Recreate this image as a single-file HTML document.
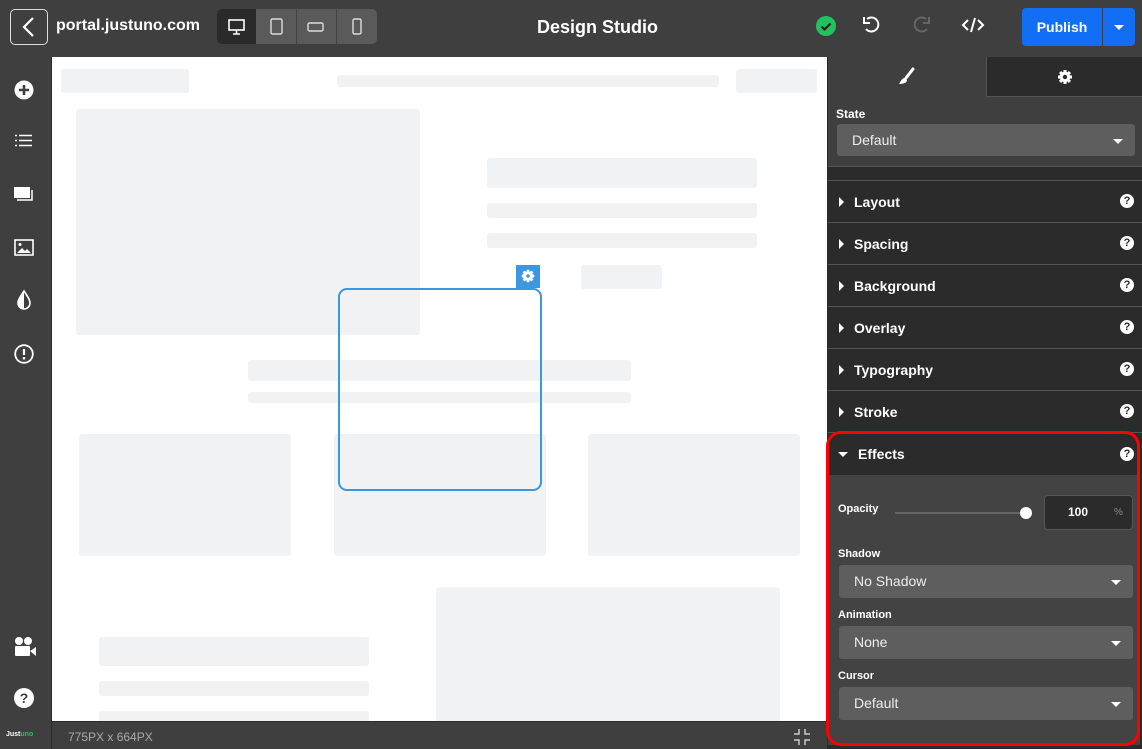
<!DOCTYPE html>
<html><head><meta charset="utf-8"><style>
*{box-sizing:border-box;margin:0;padding:0}
body{width:1142px;height:749px;overflow:hidden;background:#3f3f3f;font-family:"Liberation Sans",sans-serif;color:#fff;position:relative}
.a{position:absolute}
.g{position:absolute;background:#f1f2f4;border-radius:3px}
.row{position:absolute;left:828px;width:314px;height:42px;background:#2b2b2b;border-bottom:1px solid #555;font-weight:bold;font-size:14px}
.row .t{position:absolute;left:26px;top:13px}
.row .tri{position:absolute;left:11px;top:16px;width:0;height:0;border-left:5px solid #fff;border-top:5px solid transparent;border-bottom:5px solid transparent}
.q{position:absolute;right:8px;top:13px;width:14px;height:14px;border-radius:50%;background:#fff;color:#2b2b2b;font-size:11px;font-weight:bold;text-align:center;line-height:14px}
.sel{position:absolute;background:#5e5e5e;border-radius:3px;font-size:14px;color:#eee}
.sel span{position:absolute;left:15px;top:8px}
.sel i{position:absolute;right:12px;top:15px;border-top:5px solid #fff;border-left:5px solid transparent;border-right:5px solid transparent}
.lbl{position:absolute;font-size:12px;font-weight:bold}
</style></head><body>
<svg width="0" height="0" style="position:absolute"><defs>
<g id="gear"><g fill="currentColor"><rect x="-1.6" y="-7" width="3.2" height="14" rx=".6"/><rect x="-1.6" y="-7" width="3.2" height="14" rx=".6" transform="rotate(45)"/><rect x="-1.6" y="-7" width="3.2" height="14" rx=".6" transform="rotate(90)"/><rect x="-1.6" y="-7" width="3.2" height="14" rx=".6" transform="rotate(135)"/><circle r="5.2"/></g></g>
</defs></svg>
<!-- top bar -->
<div class="a" style="left:10px;top:9px;width:38px;height:36px;border:1.5px solid #ddd;border-radius:5px"></div>
<svg class="a" style="left:20px;top:16px" width="18" height="22"><path d="M13 2 L4 11 L13 20" stroke="#fff" stroke-width="2.2" fill="none"/></svg>
<div class="a" style="left:56px;top:17px;font-size:16px;font-weight:bold">portal.justuno.com</div>
<div class="a" style="left:217px;top:9px;width:160px;height:35px;background:#5a5a5a;border-radius:5px;overflow:hidden">
<div class="a" style="left:0;top:0;width:39px;height:35px;background:#2a2a2a"></div>
<div class="a" style="left:79px;top:0;width:1px;height:35px;background:#444"></div>
<div class="a" style="left:119px;top:0;width:1px;height:35px;background:#444"></div>
<svg class="a" style="left:11px;top:9px" width="18" height="18"><rect x="1" y="2" width="15" height="10" fill="none" stroke="#fff" stroke-width="1.6"/><path d="M5 16h7M8.5 12v4" stroke="#fff" stroke-width="1.6"/></svg>
<svg class="a" style="left:52px;top:9px" width="16" height="18"><rect x="2" y="1" width="11" height="15" rx="1.5" fill="none" stroke="#ddd" stroke-width="1.4"/></svg>
<svg class="a" style="left:90px;top:11px" width="18" height="14"><rect x="1" y="3" width="15" height="8" rx="1.5" fill="none" stroke="#ddd" stroke-width="1.4"/></svg>
<svg class="a" style="left:133px;top:9px" width="14" height="18"><rect x="3" y="1" width="8" height="15" rx="1.5" fill="none" stroke="#ddd" stroke-width="1.4"/></svg>
</div>
<div class="a" style="left:537px;top:17px;font-size:18px;font-weight:bold">Design Studio</div>
<svg class="a" style="left:816px;top:16px" width="20" height="20"><circle cx="10" cy="10" r="10" fill="#1fc35e"/><path d="M5.5 10.5l3 3 6-6" stroke="#222" stroke-width="2.2" fill="none"/></svg>
<svg class="a" style="left:861px;top:14px" width="22" height="22"><path d="M6 5 A7 7 0 1 1 5 15" stroke="#fff" stroke-width="2" fill="none"/><path d="M3 3 v6 h6" stroke="#fff" stroke-width="2" fill="none"/></svg>
<svg class="a" style="left:910px;top:14px" width="22" height="22"><path d="M16 5 A7 7 0 1 0 17 15" stroke="#666" stroke-width="2" fill="none"/><path d="M19 3 v6 h-6" stroke="#666" stroke-width="2" fill="none"/></svg>
<svg class="a" style="left:961px;top:15px" width="24" height="20"><path d="M7 5 L2 10 L7 15 M17 5 L22 10 L17 15 M14 3 L10 17" stroke="#fff" stroke-width="2" fill="none"/></svg>
<div class="a" style="left:1022px;top:8px;width:80px;height:38px;background:#136ef6;border-radius:4px 0 0 4px;font-size:14px;font-weight:bold;text-align:center;line-height:38px">Publish</div>
<div class="a" style="left:1103px;top:8px;width:32px;height:38px;background:#136ef6;border-radius:0 4px 4px 0"><i class="a" style="left:11px;top:17px;border-top:5px solid #fff;border-left:5px solid transparent;border-right:5px solid transparent"></i></div>
<!-- sidebar -->
<div class="a" style="left:51px;top:57px;width:1px;height:692px;background:#2b2b2b"></div>
<svg class="a" style="left:14px;top:80px" width="20" height="20"><circle cx="10" cy="10" r="9.5" fill="#fff"/><path d="M10 5v10M5 10h10" stroke="#3f3f3f" stroke-width="2.6"/></svg>
<svg class="a" style="left:14px;top:134px" width="20" height="16"><path d="M1 1.5h2M1 6.5h2M1 11.5h2M5 1.5h13M5 6.5h13M5 11.5h13" stroke="#fff" stroke-width="1.6"/></svg>
<svg class="a" style="left:14px;top:186px" width="20" height="18"><rect x="0" y="1" width="16" height="11" fill="#fff"/><path d="M18 4v10H3" stroke="#fff" stroke-width="1.5" fill="none"/></svg>
<svg class="a" style="left:14px;top:239px" width="20" height="18"><rect x="1" y="1" width="18" height="15" fill="none" stroke="#fff" stroke-width="1.6"/><path d="M3 14l5-5 3 3 2-2 4 4z" fill="#fff"/><circle cx="6" cy="5.5" r="1.5" fill="#fff"/></svg>
<svg class="a" style="left:15px;top:289px" width="18" height="22"><path d="M9 2 C5 8 3 11 3 14 a6 6 0 0 0 12 0 C15 11 13 8 9 2z" fill="none" stroke="#fff" stroke-width="1.6"/><path d="M9 2 C5 8 3 11 3 14 a6 6 0 0 0 6 6z" fill="#fff"/></svg>
<svg class="a" style="left:14px;top:344px" width="20" height="20"><circle cx="10" cy="10" r="8.8" fill="none" stroke="#fff" stroke-width="1.8"/><path d="M10 5v6" stroke="#fff" stroke-width="2.2"/><circle cx="10" cy="14.3" r="1.3" fill="#fff"/></svg>
<svg class="a" style="left:13px;top:636px" width="24" height="22"><circle cx="6" cy="5" r="4" fill="#fff"/><circle cx="15" cy="5" r="4" fill="#fff"/><rect x="2" y="10" width="15" height="10" rx="1" fill="#fff"/><path d="M17 15l6-4v9z" fill="#fff"/></svg>
<svg class="a" style="left:14px;top:688px" width="20" height="20"><circle cx="10" cy="10" r="10" fill="#fff"/><text x="10" y="15" font-size="14" font-weight="bold" fill="#3f3f3f" text-anchor="middle" font-family="Liberation Sans">?</text></svg>
<div class="a" style="left:6px;top:731px;font-size:7px;font-weight:bold">Just<span style="color:#1fc35e">uno</span></div>
<!-- canvas -->
<div class="a" style="left:52px;top:57px;width:775px;height:664px;background:#fff;overflow:hidden">
<div class="g" style="left:9px;top:12px;width:128px;height:24px"></div>
<div class="g" style="left:285px;top:18px;width:382px;height:12px"></div>
<div class="g" style="left:684px;top:12px;width:81px;height:24px"></div>
<div class="g" style="left:24px;top:52px;width:344px;height:226px"></div>
<div class="g" style="left:435px;top:101px;width:270px;height:30px"></div>
<div class="g" style="left:435px;top:146px;width:270px;height:15px"></div>
<div class="g" style="left:435px;top:176px;width:270px;height:15px"></div>
<div class="g" style="left:529px;top:208px;width:81px;height:24px"></div>
<div class="g" style="left:196px;top:303px;width:383px;height:21px"></div>
<div class="g" style="left:196px;top:335px;width:383px;height:11px"></div>
<div class="g" style="left:27px;top:377px;width:212px;height:122px"></div>
<div class="g" style="left:282px;top:377px;width:212px;height:122px"></div>
<div class="g" style="left:536px;top:377px;width:212px;height:122px"></div>
<div class="g" style="left:384px;top:530px;width:344px;height:140px"></div>
<div class="g" style="left:47px;top:580px;width:270px;height:29px"></div>
<div class="g" style="left:47px;top:624px;width:270px;height:15px"></div>
<div class="g" style="left:47px;top:654px;width:270px;height:15px"></div>
<div class="a" style="left:286px;top:231px;width:204px;height:203px;border:2px solid #3a97e0;border-radius:9px"></div>
<div class="a" style="left:464px;top:208px;width:24px;height:23px;background:#3a97e0"></div>
<svg class="a" style="left:469px;top:212px;color:#fff" width="14" height="14"><g transform="translate(7 7) scale(.9)"><use href="#gear"/><circle r="2" fill="#3a97e0"/></g></svg>
</div>
<div class="a" style="left:52px;top:721px;width:775px;height:28px;background:#3f3f3f;border-top:1px solid #2b2b2b"></div>
<div class="a" style="left:68px;top:730px;font-size:12px;color:#aaa">775PX x 664PX</div>
<svg class="a" style="left:793px;top:728px" width="18" height="18"><path d="M6 1v5H1M12 1v5h5M6 17v-5H1M12 17v-5h5" stroke="#ccc" stroke-width="1.5" fill="none"/></svg>
<!-- panel -->
<div class="a" style="left:827px;top:57px;width:1px;height:692px;background:#2b2b2b"></div>
<div class="a" style="left:986px;top:57px;width:156px;height:40px;background:#2b2b2b;border-left:1px solid #555;border-bottom:1px solid #555"></div>
<svg class="a" style="left:898px;top:67px" width="18" height="20"><path d="M15 2 L8 11" stroke="#fff" stroke-width="3" stroke-linecap="round"/><path d="M7 11 C4 11 3 14 1 17 C5 17 9 16 9 13z" fill="#fff"/></svg>
<svg class="a" style="left:1057px;top:69px;color:#fff" width="16" height="16"><g transform="translate(8 8)"><use href="#gear"/><circle r="2.2" fill="#2b2b2b"/></g></svg>
<div class="lbl" style="left:836px;top:107px">State</div>
<div class="sel" style="left:837px;top:124px;width:298px;height:32px"><span style="top:8px">Default</span><i style="top:15px"></i></div>
<div class="a" style="left:828px;top:166px;width:314px;height:15px;background:#2b2b2b;border-top:1px solid #555;border-bottom:1px solid #555"></div>
<div class="row" style="top:181px"><i class="tri"></i><span class="t">Layout</span><b class="q">?</b></div>
<div class="row" style="top:223px"><i class="tri"></i><span class="t">Spacing</span><b class="q">?</b></div>
<div class="row" style="top:265px"><i class="tri"></i><span class="t">Background</span><b class="q">?</b></div>
<div class="row" style="top:307px"><i class="tri"></i><span class="t">Overlay</span><b class="q">?</b></div>
<div class="row" style="top:349px"><i class="tri"></i><span class="t">Typography</span><b class="q">?</b></div>
<div class="row" style="top:391px"><i class="tri"></i><span class="t">Stroke</span><b class="q">?</b></div>
<div class="a" style="left:828px;top:433px;width:314px;height:316px;background:#2b2b2b"></div>
<div class="a" style="left:828px;top:475px;width:312px;height:270px;background:#434343"></div>
<div class="a" style="left:826px;top:431px;width:314px;height:315px;border:3px solid #f00;border-radius:15px"></div>
<i class="a" style="left:838px;top:452px;border-top:5px solid #fff;border-left:5px solid transparent;border-right:5px solid transparent"></i>
<div class="a" style="left:858px;top:446px;font-size:14px;font-weight:bold">Effects</div>
<b class="q" style="right:8px;top:447px">?</b>
<div class="lbl" style="left:838px;top:503px;font-size:11px">Opacity</div>
<div class="a" style="left:895px;top:512px;width:130px;height:2px;background:#666"></div>
<div class="a" style="left:1020px;top:507px;width:12px;height:12px;border-radius:50%;background:#fff"></div>
<div class="a" style="left:1044px;top:495px;width:89px;height:35px;background:#2b2b2b;border:1px solid #555;border-radius:4px"></div>
<div class="a" style="left:1068px;top:505px;font-size:12px;font-weight:bold">100</div>
<div class="a" style="left:1114px;top:507px;font-size:10px;color:#888">%</div>
<div class="lbl" style="left:838px;top:548px;font-size:11px">Shadow</div>
<div class="sel" style="left:839px;top:565px;width:294px;height:33px"><span>No Shadow</span><i></i></div>
<div class="lbl" style="left:838px;top:609px;font-size:11px">Animation</div>
<div class="sel" style="left:839px;top:626px;width:294px;height:33px"><span>None</span><i></i></div>
<div class="lbl" style="left:838px;top:670px;font-size:11px">Cursor</div>
<div class="sel" style="left:839px;top:687px;width:294px;height:33px"><span>Default</span><i></i></div>
</body></html>
